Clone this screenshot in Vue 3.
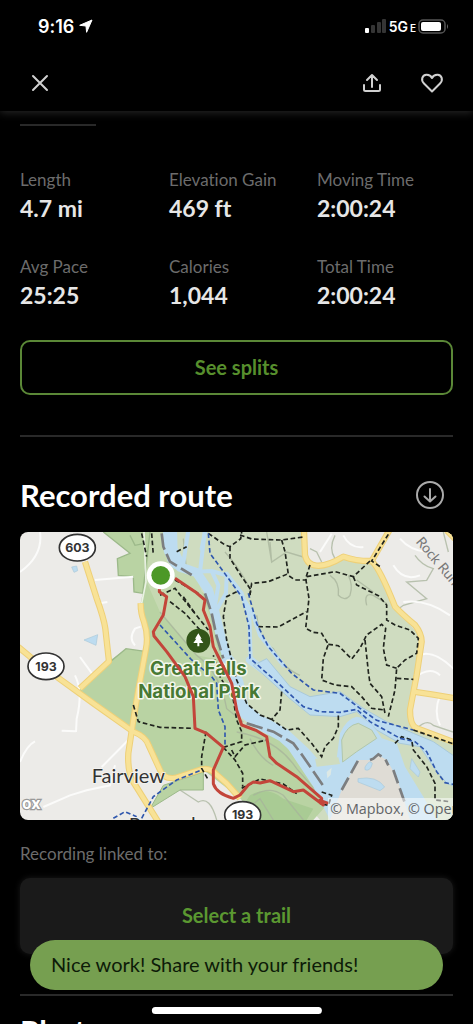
<script setup>
const stats = [
  { label: 'Length', value: '4.7 mi' },
  { label: 'Elevation Gain', value: '469 ft' },
  { label: 'Moving Time', value: '2:00:24' },
  { label: 'Avg Pace', value: '25:25' },
  { label: 'Calories', value: '1,044' },
  { label: 'Total Time', value: '2:00:24' },
]

const yellowRoads = [
  'M195 89L230 199Q252 260 256 290L267 388L180 469',
  'M-5 345L30 374L110 434L220 514L340 599Q378 614 386 640L420 714Q430 742 465 738L545 712Q570 706 590 728L620 754L660 799',
  'M362 214Q362 245 372 269Q386 310 378 350L355 474L340 564L325 664Q322 720 340 750L415 870',
  'M852 -5L855 70Q862 100 890 101Q920 104 970 74Q1010 88 1055 87Q1080 110 1125 224Q1150 250 1185 279Q1205 305 1205 329L1190 429L1170 534Q1170 580 1190 589L1305 632',
  'M1180 479L1240 488L1305 499',
  'M1055 87L1108 -5',
  'M1280 -5L1305 20',
]

const whiteRoads = [
  'M60 0Q70 70 0 120', 'M225 144L340 134', 'M230 215L262 210', 'M345 340Q325 320 345 290L362 284',
  'M165 430Q190 480 170 560L168 600M125 596L168 598', 'M0 690Q20 640 45 628', 'M325 624L245 705', 'M70 825L150 790L200 775L270 760L285 700',
  'M180 375L220 430', 'M970 10Q990 50 1030 45', 'M900 60L935 5', 'M1120 100Q1150 150 1200 130', 'M1150 210Q1220 200 1290 250',
  'M1195 370Q1240 350 1300 410', 'M1180 440Q1230 400 1260 430', 'M1260 490Q1240 540 1260 580', 'M1140 20Q1170 55 1220 60',
]

const grayPaths = [
  'M1185 70Q1205 100 1240 110L1220 145L1160 150L1220 200L1150 220L1130 235',
  'M740 0L755 90L800 60L850 75M755 90L750 30', 'M930 130Q960 150 955 190Q975 210 990 190Q1000 160 985 130',
  'M945 10Q925 50 945 80', 'M1040 220Q1030 180 1060 190L1100 215', 'M870 50L890 60L905 90', 'M1010 144L1060 180',
  'M420 240Q470 300 530 370Q600 420 620 530L670 570', 'M710 250Q720 330 760 350Q790 410 840 430',
  'M650 600Q770 620 830 710L900 790', 'M690 620Q720 680 760 700', 'M700 790Q750 760 790 790L850 864',
  'M640 864L720 800L760 864', 'M480 774L535 810Q570 790 590 864', 'M950 814Q1000 760 1070 790L1090 864',
  'M1190 590Q1220 560 1240 580L1299 600', 'M1270 0L1285 60', 'M490 20L500 120', 'M615 60Q660 110 690 170',
]

const footpaths = [
  'M565 4L615 39L630 44L662 20L665 0', 'M660 9L695 21L785 24L850 15', 'M630 44L630 79L665 134L693 174L687 194',
  'M690 189L695 154L745 149L800 127L825 144L860 144', 'M785 24L795 59L805 127',
  'M870 99L857 139L867 199L857 289L880 301L905 304L925 337L910 379L905 444L945 459L995 464L1025 494L1055 529L1095 534',
  'M860 134L945 119L1000 134L1050 87',
  'M1000 134L1010 159L1075 191L1100 219L1100 264L1125 279L1170 294L1195 319L1190 364L1155 384L1130 409L1125 474L1105 554',
  'M1130 439L1180 442', 'M1105 7L1055 87L1080 104',
  'M925 337L955 341L995 381L1020 349L1040 309L1085 277L1097 289L1090 349L1100 399L1130 409',
  'M1035 324L1045 419L1050 454L1085 494L1095 544', 'M715 284L775 285L860 239',
  'M650 179L620 194L610 254L620 324L650 444L680 514L720 549L755 562',
  'M785 479L780 534L755 562L800 594L835 589L875 634L905 674L915 644L940 619L955 584L955 544',
  'M1125 634L1145 614L1175 624L1180 654L1220 704L1245 754L1245 804L1290 809',
  'M340 519L355 569L420 586L520 589', 'M558 599L545 674L545 709L565 744', 'M610 646L645 684L668 724L668 764',
  'M610 646L665 629L665 599L650 564L640 504L600 434L580 370', 'M635 654L645 674L675 639L740 624',
  'M665 769L720 741L790 756L830 785', 'M420 190L465 169L500 214L565 294', 'M450 209L495 244L540 294',
  'M465 144L535 184', 'M490 194L525 244', 'M365 4L380 74', 'M395 4L400 69', 'M470 59L500 44',
  'M1180 594L1305 637', 'M905 780L935 790L925 820L900 815',
]

const bluePaths = [
  'M565 4L570 64L625 139L665 194L687 284L690 379L775 454L850 524L900 539L960 541L1010 532L1050 569L1140 619L1185 629L1220 659L1250 719L1275 752L1305 758',
  'M685 184L710 274L745 344L815 424L880 474L960 484L1020 529L1070 565L1180 594',
  'M420 279L515 384L575 434L590 454L595 534L615 584L615 644', 'M365 859L400 794L470 744L545 714', 'M280 859L315 839L350 854',
]

const shields = [
  { x: 172, y: 47, text: '603' },
  { x: 78, y: 403, text: '193' },
  { x: 668, y: 849, text: '193' },
]
</script>

<template>
  <div class="screen">
    <header class="top">
      <div class="status">
        <div class="clock">
          <span>9:16</span>
          <svg width="14" height="14" viewBox="0 0 14 14" aria-hidden="true"><path d="M13 1L7.600 13.300L7 7L.7 6.300Z" fill="#fff" stroke="#fff" stroke-linejoin="round" /></svg>
        </div>
        <div class="signal">
          <svg width="23" height="14" viewBox="0 0 23 14" aria-hidden="true">
            <rect x="1" y="9" width="4" height="5" rx="1" fill="#fff" />
            <rect x="7" y="6" width="4" height="8" rx="1" fill="#353535" />
            <rect x="13" y="3" width="4" height="11" rx="1" fill="#353535" />
            <rect x="18" y="0" width="4" height="14" rx="1" fill="#353535" />
          </svg>
          <span class="network">5G<small>E</small></span>
          <svg width="31" height="15" viewBox="0 0 31 15" aria-hidden="true">
            <rect x="1" y="1" width="26" height="13" rx="4" fill="none" stroke="#555" stroke-width="1.500" />
            <rect x="3" y="3" width="20" height="9" rx="2" fill="#fff" />
            <path d="M29 5Q31 7.500 29 10Z" fill="#666" />
          </svg>
        </div>
      </div>
      <nav class="toolbar">
        <button class="icon" aria-label="Close">
          <svg width="20" height="20" viewBox="0 0 20 20"><path d="M3 3L17 17M17 3L3 17" /></svg>
        </button>
        <div class="actions">
          <button class="icon" aria-label="Share">
            <svg width="20" height="20" viewBox="0 0 20 20"><path d="M10 14V2M5 7L10 2L15 7M2 12V16.500Q2 18 3.500 18H16.500Q18 18 18 16.500V12" /></svg>
          </button>
          <button class="icon" aria-label="Favorite">
            <svg width="24" height="20" viewBox="0 0 24 20"><path d="M12 18.500L4 10.500C.5 7 2.200 2 6.500 1.800C9 1.700 11 3 12 5C13 3 15 1.700 17.500 1.800C21.800 2 23.500 7 20 10.500Z" /></svg>
          </button>
        </div>
      </nav>
    </header>

    <main class="content">
      <div class="tab-line"></div>
      <dl class="stats">
        <div v-for="s in stats" :key="s.label">
          <dt>{{ s.label }}</dt>
          <dd>{{ s.value }}</dd>
        </div>
      </dl>
      <button class="splits">See splits</button>
      <hr />
      <div class="heading">
        <h2>Recorded route</h2>
        <button class="icon" aria-label="Download route">
          <svg width="30" height="30" viewBox="0 0 30 30"><circle cx="15" cy="15" r="13" /><path d="M15 9V21M9.500 16.500L15 21.500L20.500 16.500" /></svg>
        </button>
      </div>

      <svg class="map" viewBox="0 0 1299 864" role="img" aria-label="Route map of Great Falls National Park">
        <rect width="1299" height="864" fill="#ecebe8" />
        <path fill="#cfdcc0" d="M420 0H855L860 90Q880 106 970 77L1065 89L1125 224L1205 319L1190 429L1170 534L1185 589L1299 629V864H900L640 550Z" />
        <path fill="#b9d3a3" d="M250 0L330 64L292 80L295 130L340 134L342 180L368 184L362 214L378 319L375 358L318 350L267 388L175 474L340 599L385 624L420 714L450 739L550 714L660 799L720 864H880L925 814L915 784L795 624L665 584L645 454L570 199L440 99L420 0Z" />
        <path fill="#c6d9b2" d="M390 0H440L450 99L530 135L570 250L600 384L530 370L420 240L380 150Z" />
        <path fill="none" stroke="#9cb98a" stroke-width="4" d="M250 0L330 64L292 80L295 130L340 134L342 180L368 184L390 0M375 358L318 350L270 390M330 10L345 40L370 35" />
        <path fill="none" stroke="#fff" stroke-opacity=".7" stroke-width="5" d="M372 0L378 150L365 214" />
        <path fill="#b9d3a3" stroke="#9cb98a" stroke-width="3" d="M390 830L430 760L550 720V774L480 774Z" />
        <path fill="#a9cb94" d="M640 864L690 790Q740 760 790 800L880 830L860 864Z" />
        <g fill="none" stroke="#a7b39b" stroke-opacity=".75" stroke-width="4"><path v-for="p in grayPaths" :key="p" :d="p" /></g>
        <g fill="none" stroke="#fbfbfa" stroke-width="6"><path v-for="p in whiteRoads" :key="p" :d="p" /></g>

        <g fill="none" stroke="#bddcf0" stroke-linecap="round" stroke-linejoin="round">
          <path stroke-width="42" d="M450 -6L452 54L470 90" />
          <path stroke-width="28" d="M455 80L480 105L530 122L565 174L585 244L605 324L630 400" />
          <path stroke-width="42" d="M625 390L650 454L665 530L710 566L790 609L850 664L920 744" />
          <path stroke-width="12" d="M505 -6L490 94M555 -6L540 119M530 119L575 117L620 130L618 184L590 234M575 117L595 160L585 220M620 125L665 184L688 254L692 384L765 434" />
          <path stroke-width="12" d="M555 0L545 50M650 165L700 250L720 310L790 400" />
          <path stroke-width="24" d="M690 384L765 440L830 500" />
        </g>
        <path fill="#bddcf0" stroke="#a9c9da" stroke-width="3" d="M740 380L810 464L870 494L960 479L1030 529L1100 569L1180 604L1240 629L1305 674V764L1280 754L1240 704L1200 644L1140 634L1070 594L1010 539L960 554L870 549L810 500L700 400Z" />
        <path fill="#bddcf0" d="M770 599L880 674L910 689L950 679L960 604Q980 560 1010 554Q1050 560 1085 619L1130 634L1155 704L1210 794L1250 864H930L880 764Z" />
        <path fill="#cfdcc0" stroke="#b1c7ab" stroke-width="3" d="M968 690L965 624Q980 580 1015 574L1055 594L1070 619L1010 659Z" />
        <path fill="#cfdcc0" d="M885 680L955 676L960 696L890 704Z" />
        <path fill="#dfdcd5" d="M930 864L965 774L1015 684H1060L1075 669L1100 684L1130 734L1155 814L1170 864Z" />
        <path fill="#bddcf0" stroke="#a9c9da" stroke-width="2" d="M1014 740Q1070 730 1094 765L1080 776L1014 750ZM1035 705Q1050 680 1057 695Q1050 720 1035 713ZM1175 680L1200 720L1195 735L1170 710ZM192 324L233 308L228 340ZM155 105L170 102L173 116L162 121Z" />
        <path fill="#dce8e5" d="M920 720L935 707L932 728L922 739Z" />

        <g fill="none" stroke="#eed078" stroke-width="19" stroke-linejoin="round"><path v-for="p in yellowRoads" :key="p" :d="p" /></g>
        <g fill="none" stroke="#f8e296" stroke-width="13" stroke-linejoin="round"><path v-for="p in yellowRoads" :key="p" :d="p" /></g>
        <g fill="none" stroke="#7c7e80" stroke-width="8">
          <path stroke-dasharray="50 14" d="M425 4L430 44L450 89L515 129M555 184L575 244L590 314L610 379M680 574L760 599L820 634L850 674L915 769" />
          <path stroke-dasharray="42 16" d="M965 774L1015 684M1050 684L1060 680L1075 667L1095 680L1105 700M1120 714L1155 814" />
        </g>
        <g fill="none" stroke="#20241e" stroke-width="5" stroke-dasharray="14 8"><path v-for="p in footpaths" :key="p" :d="p" /></g>
        <g fill="none" stroke="#3058ae" stroke-width="5" stroke-dasharray="14 8"><path v-for="p in bluePaths" :key="p" :d="p" /></g>

        <circle cx="535" cy="326" r="36" fill="#335519" />
        <path d="M535 304L545 320H541L550 333H538V343H532V333H520L529 320H525Z" fill="#fff" />
        <g class="park" text-anchor="middle">
          <text x="535" y="430">Great Falls</text>
          <text x="537" y="498">National Park</text>
        </g>
        <path fill="none" stroke="#c3453a" stroke-width="9" stroke-linejoin="round" d="M420 139L418 179L440 194L430 249L400 299L402 312L440 359L495 434L520 494L525 589L560 604L610 646L580 714L580 755Q590 785 640 799L660 789L685 759L700 750L720 753L750 746L820 779L850 774L910 819L900 805L925 814M905 819L905 799L830 734L770 694L750 674L740 614L710 596L665 579L650 534L635 454L600 384L580 344L570 284L550 234L555 204L525 179L465 139" />
        <circle cx="422" cy="130" r="42" fill="#fff" />
        <circle cx="422" cy="130" r="28" fill="#4c9827" />

        <g v-for="(s, i) in shields" :key="i" class="shield" text-anchor="middle">
          <ellipse :cx="s.x" :cy="s.y" rx="54" ry="40" fill="#fff" stroke="#333" stroke-width="5" />
          <text :x="s.x" :y="s.y + 13">{{ s.text }}</text>
        </g>
        <text class="town" x="215" y="753">Fairview</text>
        <text class="town" x="326" y="900">P</text>
        <text class="town" x="513" y="898">l</text>
        <text class="road" transform="translate(1186 30) rotate(50)">Rock Run</text>
        <text class="brand" x="6" y="832">ox</text>
        <rect x="924" y="798" width="375" height="66" fill="#fff" fill-opacity=".5" />
        <text class="credit" x="931" y="847">© Mapbox, © OpenStreetMap</text>
      </svg>

      <p class="linked">Recording linked to:</p>
      <button class="trail">Select a trail</button>
      <hr class="last" />
      <h2 class="photos">Photos</h2>
    </main>

    <div class="toast" role="status">Nice work! Share with your friends!</div>
    <div class="home"></div>
  </div>
</template>

<style>
body { margin: 0; background: #000; }
</style>

<style scoped>
.screen {
  position: relative;
  box-sizing: border-box;
  height: 100vh;
  overflow: hidden;
  background: #000;
  color: #e6e6e6;
  font-family: Lato, "Open Sans", sans-serif;
  font-variant-ligatures: none;
}
button { padding: 0; border: 0; background: none; font-family: inherit; cursor: pointer; }
svg { display: block; }
.top { height: 111px; box-shadow: 0 2px 8px #252525; position: relative; background: #000; }
.status {
  display: flex;
  justify-content: space-between;
  align-items: center;
  height: 52px;
  padding: 0 24px 0 38px;
  font-family: Inter, sans-serif;
  color: #fff;
}
.clock, .signal { display: flex; align-items: center; }
.clock { gap: 5px; font-size: 18px; font-weight: 600; }
.signal { gap: 2px; }
.network { font-size: 14px; font-weight: 600; }
.network small { font-size: 10px; margin-left: 2px; }
.toolbar { display: flex; justify-content: space-between; height: 62px; align-items: center; padding: 0 29px 0 30px; }
.actions { display: flex; gap: 38px; }
.icon svg { fill: none; stroke: #d0d0d0; stroke-width: 2; stroke-linecap: round; stroke-linejoin: round; }
.content { padding: 13px 20px 0; }
.tab-line { width: 76px; height: 2px; background: #292929; }
.stats { display: grid; grid-template-columns: 149px 148px 1fr; row-gap: 30px; margin: 41px 0 0; }
dt { font-size: 17px; line-height: 25px; color: #6c6c6c; white-space: nowrap; }
dd { margin: 0; font-size: 23px; line-height: 32px; font-weight: 700; }
.splits {
  display: block;
  width: 100%;
  height: 55px;
  margin-top: 29px;
  padding-bottom: 2px;
  border: 2px solid #5b8837;
  border-radius: 10px;
  color: #578f2d;
  font-size: 20px;
  font-weight: 700;
}
hr { height: 2px; margin: 40px 0 0; border: 0; background: #292929; }
.heading { display: flex; justify-content: space-between; align-items: center; height: 36px; margin-top: 40px; padding-right: 8px; }
h2 { margin: 0; font-size: 31px; line-height: 36px; font-weight: 700; color: #fff; }
.heading .icon svg { stroke: #aaa; }
.map { width: 100%; height: auto; margin-top: 19px; border-radius: 8px; }
.park text { font: 700 56px Inter, sans-serif; fill: #477934; stroke: #f3f7ec; stroke-width: 9px; paint-order: stroke; stroke-linejoin: round; }
.shield text { font: 700 37px Inter, sans-serif; fill: #333; }
.town { font: 60px Lato, sans-serif; fill: #333; stroke: #f4f4f2; stroke-width: 5px; paint-order: stroke; }
.road { font: 42px Lato, sans-serif; fill: #777; }
.brand { font: 700 46px "Open Sans", sans-serif; fill: #fff; stroke: #999; stroke-width: 7px; paint-order: stroke; }
.credit { font: 43px "Open Sans", sans-serif; fill: #626568; }
.linked { margin: 22px 0 0; font-size: 17px; line-height: 24px; color: #6c6c6c; }
.trail {
  display: block;
  width: 100%;
  height: 76px;
  margin-top: 12px;
  padding-bottom: 3px;
  border-radius: 10px;
  background: #1a1a1a;
  box-shadow: 0 0 6px #1a1a1a;
  color: #5b9831;
  font-size: 20px;
  font-weight: 700;
}
.last { margin-top: 40px; }
.photos { margin-top: 17px; }
.toast {
  position: absolute;
  left: 30px;
  right: 30px;
  bottom: 34px;
  box-sizing: border-box;
  height: 50px;
  padding: 0 21px;
  border-radius: 25px;
  background: #769f50;
  color: #0d1b08;
  font-size: 20px;
  line-height: 49px;
}
.home { position: absolute; left: 50%; bottom: 10px; width: 36%; height: 7px; border-radius: 4px; background: #fff; transform: translateX(-50%); }
</style>
